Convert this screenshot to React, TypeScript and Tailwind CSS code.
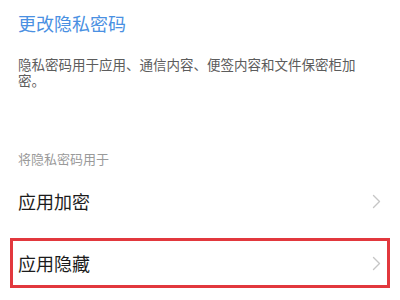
const font = { fontFamily: '"Noto Sans CJK SC", "Noto Sans", sans-serif' };

function Chevron() {
  return (
    <svg width="9" height="15" viewBox="0 0 9 15" fill="none" className="shrink-0">
      <polyline points="1.5,1.5 7.5,7.5 1.5,13.5" stroke="#c6c6c6" strokeWidth="1.4" strokeLinecap="round" strokeLinejoin="round" />
    </svg>
  );
}

export default function App() {
  return (
    <div className="w-[400px] h-[300px] bg-white overflow-hidden" style={font}>
      {/* Header */}
      <div className="pt-[11px] px-[18px]">
        <h1 className="text-[18px] leading-[24px] text-[#4a90e2] font-normal">更改隐私密码</h1>
        <p className="mt-[21px] w-[350px] text-[13.5px] leading-[16px] text-[#5c5c5c]">
          隐私密码用于应用、通信内容、便签内容和文件保密柜加密。
        </p>
      </div>

      {/* Section */}
      <p className="mt-[62px] px-[18px] text-[13px] leading-[18px] text-[#9a9a9a]">将隐私密码用于</p>

      <div className="mt-[3px] h-[60px] pl-[18px] pr-[19px] flex items-center justify-between">
        <span className="text-[18px] text-[#1c1c1c]">应用加密</span>
        <Chevron />
      </div>

      <div className="mt-[7px] mx-[10px] h-[50px] border-[3px] border-[#e2383d] pl-[5px] pr-[6px] flex items-center justify-between">
        <span className="text-[18px] text-[#1c1c1c]">应用隐藏</span>
        <Chevron />
      </div>
    </div>
  );
}
